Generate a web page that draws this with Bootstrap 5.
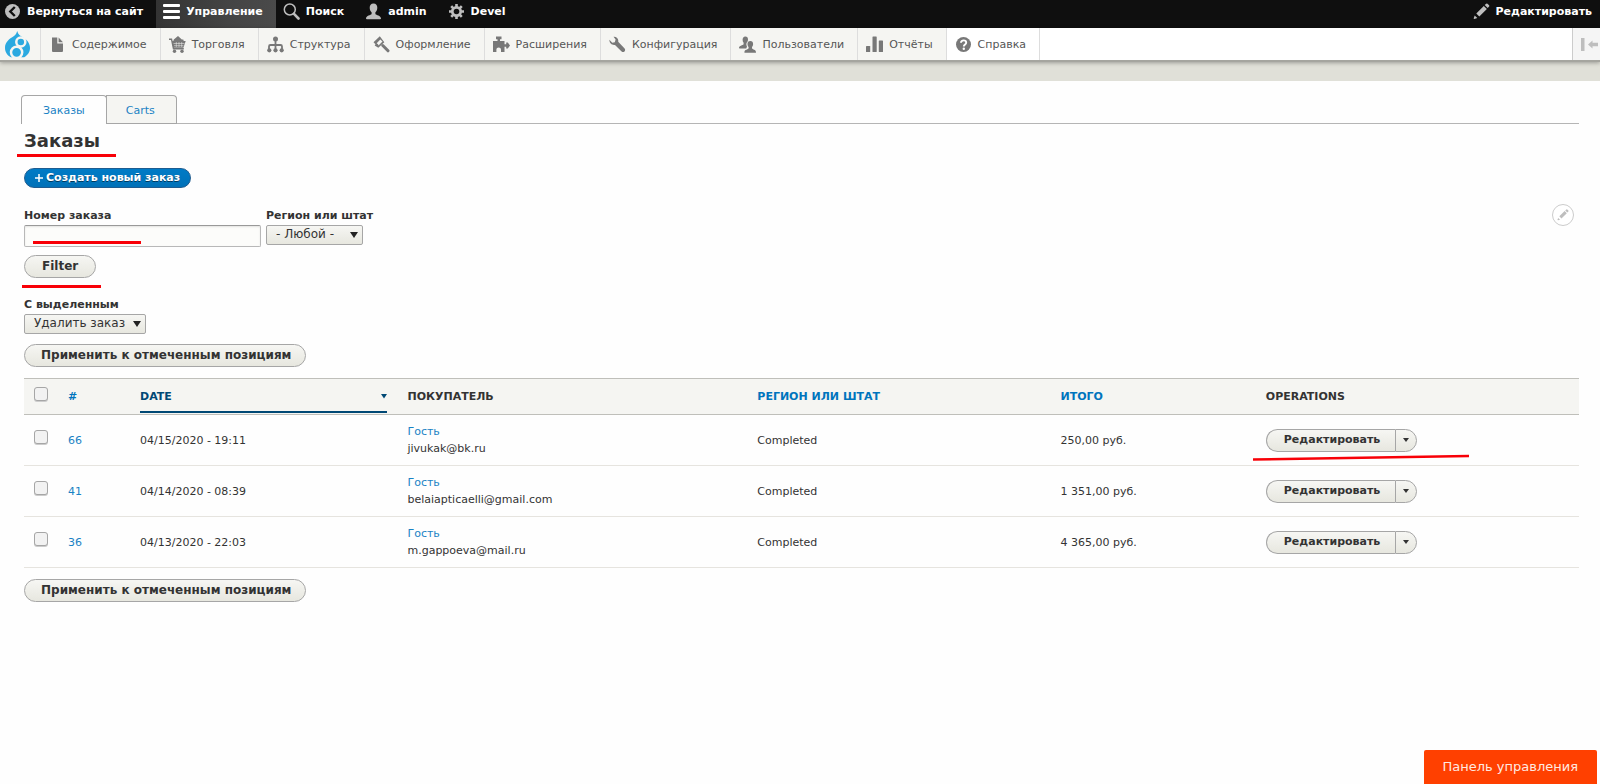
<!DOCTYPE html>
<html lang="ru">
<head>
<meta charset="utf-8">
<meta name="viewport" content="width=device-width, initial-scale=1">
<title>Заказы</title>
<link href="https://cdn.jsdelivr.net/npm/bootstrap@5.3.0/dist/css/bootstrap.min.css" rel="stylesheet">
<style>
  body { font: 11px/16px "DejaVu Sans", sans-serif; color: #333; background: #fefefe; min-height: 100vh; }
  a { color: #0074bd; text-decoration: none; }
  a:hover { color: #004f80; }

  .admin-bar { background: #0f0f0f; height: 28px; }
  .admin-bar a { color: #fff; font-weight: 700; padding: 0 14px 5px 7px; gap: 6px; }
  .admin-bar a.bar-home { padding-left: 4px; padding-right: 13px; }
  .admin-bar a.bar-active { padding-right: 13px; background: linear-gradient(90deg, #333, #444 60%, #4a4a4a); }
  .admin-bar a.bar-edit { padding-right: 8px; gap: 5px; }
  .admin-bar svg, .admin-tray svg { width: 17px; height: 17px; flex: none; }

  .admin-tray { height: 34px; background: #fff; border-bottom: 2px solid #a5a59f; box-shadow: 0 1px 4px rgba(0,0,0,.3); z-index: 2; }
  .admin-tray a { color: #565656; padding: 1px 13px 0 8px; gap: 6px; background: #f5f5f2; border-right: 1px solid #ddd; }
  .admin-tray a.tray-logo { padding: 0 9px 0 4px; }
  .admin-tray a.tray-logo svg { width: 27px; height: 27px; }
  .admin-tray a.tray-help { background: #fff; }
  .admin-tray button { width: 28px; background: #f5f5f5; border: 0; border-left: 1px solid #ccc; padding: 0 0 0 8px; }
  .page-strip { height: 19px; background: #e0e0d8; }

  .page-main { padding: 14px 21px 0; }
  .page-tabs { border-bottom: 1px solid #b5b5b5; }
  .page-tabs a { height: 28px; padding: 2px 21px 0; color: #1a82c4; border: 1px solid #a6a6a6; border-bottom: 0; background: #f5f5f2; border-radius: 0 4px 0 0; margin-left: -1px; }
  .page-tabs a.tab-current { height: 29px; margin: 0 0 -1px; background: #fefefe; border-radius: 4px 4px 0 0; z-index: 1; }
  .page-tabs a:last-child { padding: 2px 21px 0 19px; box-shadow: 0 1px 0 #a6a6a6; }

  .page-body { padding: 0 0 0 3px; }
  .page-title { font-size: 18px; line-height: 24px; font-weight: 700; margin: 5px 0 15px; }
  .btn-new { height: 20px; padding: 1px 10px; gap: 3px; border: 1px solid #1e5c90; border-radius: 20px; background: linear-gradient(#007bc6, #0071b8); color: #fff; font-size: 11px; line-height: 16px; font-weight: 700; text-shadow: 0 1px #0000007f; }
  .btn-new:hover { color: #fff; }

  .field-label { font-weight: 700; line-height: 14px; margin-bottom: 2px; }
  .text-entry { width: 237px; height: 22px; border: 1px solid #b8b8b8; border-top-color: #999; border-radius: 2px; background: #fcfcfa; font-size: 12px; box-shadow: inset 0 1px 2px rgba(0,0,0,.1); }
  .pick { height: 20px; padding: 0 16px 2px 9px; line-height: 16px; font-size: 12px; color: #333; border: 1px solid #a6a6a6; border-radius: 2px;
    background: url("data:image/svg+xml,%3Csvg xmlns='http://www.w3.org/2000/svg' viewBox='0 0 8 6'%3E%3Cpath fill='%23222' d='M0 0h8L4 6z'/%3E%3C/svg%3E") no-repeat right 4px center / 8px 6px, linear-gradient(#f6f6f3, #e7e7df); }
  .pick-region { width: 97px; }
  .pick-action { width: 122px; }
  .btn-pill { height: 23px; padding: 0 17px 1px; border: 1px solid #a6a6a6; border-radius: 20px; background: linear-gradient(#f6f6f3, #e7e7df); color: #333; font-size: 12px; line-height: 16px; font-weight: 700; }
  .btn-apply { padding: 0 14px 1px 16px; }
  .edit-circle { width: 22px; height: 22px; right: 5px; top: -5px; border: 1px solid #ccc; border-radius: 50%; background: #fff; }
  .form-filter { margin-top: 21px; }
  .form-bulk { margin-top: 20px; }
  .bulk-choice { margin-bottom: 10px; }

  .orders { table-layout: fixed; margin: 11px 0; line-height: 17px; border-top: 1px solid #bfbfba; }
  .orders th, .orders td { padding: 0 10px; vertical-align: middle; background: transparent; color: #333; }
  .orders thead th { height: 36px; background: #f5f5f2; border-bottom: 1px solid #bfbfba; text-transform: uppercase; }
  .orders tbody td { height: 51px; border-bottom: 1px solid #e6e4df; }
  .orders tbody a { color: #1a82c4; }
  .orders .col-check { width: 34px; }
  .orders .col-num { width: 72px; }
  .orders .col-date { width: 17.2%; }
  .orders .col-buyer { width: 22.5%; }
  .orders .col-region { width: 19.5%; }
  .orders .col-total { width: 13.2%; }
  .orders thead th.date-head { vertical-align: bottom; }
  .date-head a { height: 33px; padding-top: 1px; color: #004875; border-bottom: 2px solid #004875; margin-bottom: 1px; }
  .orders .form-check-input { width: 14px; height: 14px; margin: 0 0 6px; border: 1px solid #a6a6a6; border-radius: 3px; background-color: #f2f2f2; box-shadow: 0 1px 0 #ccc; vertical-align: middle; }
  .ops .btn-pill { font-size: 11px; }
  .ops .ops-edit { padding: 0 15px 0 17px; border-radius: 20px 0 0 20px; border-right: 0; }
  .ops .ops-more { width: 22px; padding: 0; border-radius: 0 20px 20px 0; }

  .red-mark { position: absolute; height: 3px; background: #f80007; pointer-events: none; }
  .mark-title { left: -7px; width: 99px; bottom: -4px; }
  .mark-field { left: 9px; width: 108px; bottom: 3px; }
  .mark-filter { left: -2px; width: 79px; bottom: -10px; }
  .mark-ops { position: absolute; left: -13px; top: 24px; width: 216px; height: 8px; pointer-events: none; }

  .panel-btn { right: 3px; bottom: 0; height: 34px; padding: 0 19px; background: #ff4000; color: #ffe9e0; border: 0; border-radius: 2px 2px 0 0; font-size: 13px; }
</style>
</head>
<body>
<header>
  <nav class="admin-bar d-flex text-nowrap" aria-label="Панель">
    <a class="bar-home d-flex align-items-center" href="#"><svg viewBox="0 0 17 17"><circle cx="8.500" cy="8.500" r="7.500" fill="#bebebe"/><path d="M10.800 4 6.300 8.500l4.500 4.500" fill="none" stroke="#0f0f0f" stroke-width="2.400"/></svg>Вернуться на сайт</a>
    <a class="bar-active d-flex align-items-center" href="#"><svg viewBox="0 0 17 17" fill="#fff"><rect y="1" width="17" height="3" rx="1"/><rect y="7" width="17" height="3" rx="1"/><rect y="13" width="17" height="3" rx="1"/></svg>Управление</a>
    <a class="d-flex align-items-center" href="#"><svg viewBox="0 0 17 17" fill="none" stroke="#bebebe"><circle cx="6.800" cy="6.500" r="5.500" stroke-width="1.500"/><path d="m11 10.800 4.500 4.700" stroke-width="2.600" stroke-linecap="round"/></svg>Поиск</a>
    <a class="d-flex align-items-center" href="#"><svg viewBox="0 0 17 17" fill="#bebebe"><path d="M8.500.5c2.600 0 3.800 1.900 3.800 4.200 0 2-.9 3.600-1.900 4.600v1.600c.8 1.300 5.400 1.300 5.600 4.600 0 .6-.3.8-.9.800H1.900c-.6 0-.9-.2-.9-.8.200-3.300 4.800-3.300 5.600-4.600V9.300c-1-1-1.900-2.600-1.900-4.600C4.700 2.400 5.900.5 8.500.5z"/></svg>admin</a>
    <a class="d-flex align-items-center" href="#"><svg viewBox="0 0 17 17"><g stroke="#bebebe" stroke-width="2.600"><path d="M8.500 1v15M1 8.500h15M3.200 3.200l10.600 10.600M13.800 3.200 3.200 13.800"/></g><circle cx="8.500" cy="8.500" r="5.500" fill="#bebebe"/><circle cx="8.500" cy="8.500" r="2.800" fill="#0f0f0f"/></svg>Devel</a>
    <a class="bar-edit d-flex align-items-center ms-auto" href="#"><svg viewBox="0 0 17 17" fill="#bebebe"><path d="m11.700 2 1.500-1.300a1 1 0 0 1 1.300 0l1.600 1.600a1 1 0 0 1 0 1.300l-1.400 1.500zM10.800 2.900l3.100 3.100-7.600 7.400-3-3zM1.700 12.600l2.600 2.500-2.900 1-.8-.7z"/></svg>Редактировать</a>
  </nav>
  <nav class="admin-tray d-flex text-nowrap position-relative" aria-label="Управление">
    <a class="tray-logo d-flex align-items-center" href="#" aria-label="Drupal"><svg viewBox="0 0 27 27"><path d="M13.200 0c.8 3.500 3 4.800 6 6.600 3.800 2.300 6.800 5.800 6.800 10.400 0 4.200-2.400 7.400-5.800 9.200H7C3.400 24.600 1 21 1 17c0-5 3.200-8.200 6.800-10.400C10.500 5 12.400 3.200 13.200 0z" fill="#2ba9e0"/><circle cx="12.600" cy="21.300" r="5.600" fill="#2ba9e0" stroke="#f5f5f2" stroke-width="2.500"/><circle cx="16.800" cy="11" r="4.500" fill="#2ba9e0" stroke="#f5f5f2" stroke-width="2.500"/></svg></a>
    <a class="d-flex align-items-center" href="#"><svg viewBox="0 0 17 17" fill="#787878"><path d="M3 1.500h5.300v6H14V15a1 1 0 0 1-1 1H4a1 1 0 0 1-1-1zM9.600 1.500 14 6.200H9.600z"/></svg>Содержимое</a>
    <a class="d-flex align-items-center" href="#"><svg viewBox="0 0 17 17"><path d="M9 0 4.800 3.500 4 6h11l-.7-2.500h-1.500z" fill="#787878"/><path d="M0 3.200h2.500l2 9.500h10.300" fill="none" stroke="#787878" stroke-width="1.400"/><path d="M3 5h13.700l-2.300 6.800H4.300z" fill="#787878"/><path d="M4.500 7.500h11M5 9.700h9.500M7.300 6v5M10 6v5M12.700 6v5" stroke="#f5f5f2" stroke-width=".5"/><circle cx="5.500" cy="15.300" r="1.700" fill="#787878"/><circle cx="13" cy="15.300" r="1.700" fill="#787878"/></svg>Торговля</a>
    <a class="d-flex align-items-center" href="#"><svg viewBox="0 0 17 17"><path d="M8.500 4v10M2 14v-3.500q0-1.500 1.500-1.500h10q1.500 0 1.500 1.500V14" fill="none" stroke="#787878" stroke-width="1.800"/><g fill="#787878"><circle cx="8.500" cy="3" r="2.500"/><circle cx="2.300" cy="14.300" r="2.100"/><circle cx="8.500" cy="14.300" r="2.100"/><circle cx="14.700" cy="14.300" r="2.100"/></g></svg>Структура</a>
    <a class="d-flex align-items-center" href="#"><svg viewBox="0 0 17 17"><path d="M6.800.3.500 6.200l2 2.100-.8 1.200 3.600 2.300 6-5.600z" fill="#787878"/><path d="m5.500 9.500 4-3.900-2.200-2.200-3.600 3.800 1.500 1.200z" fill="#f5f5f2"/><path d="m9.800 9.500 5.200 5.300" stroke="#787878" stroke-width="3" stroke-linecap="round"/></svg>Оформление</a>
    <a class="d-flex align-items-center" href="#"><svg viewBox="0 0 17 17"><path d="M0 5h4.500V3.200H3V.5h5.500v2.700H7V5h4.500v3.300h1.700V6.600h1.600L17 9.500l-2.200 2.900h-1.600v-1.700h-1.700V16H8v-2.300c0-3-4.600-3-4.600 0V16H0z" fill="#787878"/></svg>Расширения</a>
    <a class="d-flex align-items-center" href="#"><svg viewBox="0 0 17 17"><path d="M4.500.8c3.200-.3 5.300 2 4.700 5l6.400 6.700c1.700 2-1 4.800-3 3L6 8.900C3.200 9.500.2 7.300.4 3.700l2.900 3 2.500-.5.800-2.700z" fill="#787878"/></svg>Конфигурация</a>
    <a class="d-flex align-items-center" href="#"><svg viewBox="0 0 17 17" fill="#787878"><path d="M6.300.5c1.900 0 2.700 1.300 2.700 3 0 .9-.2 1.500-.6 2.200-1.300 1-1.300 3.200-.4 5l-.8 1.700H.6c-.4 0-.6-.3-.6-.6.200-2.400 3.600-2.200 4.600-3.600V6.700c-.7-.8-1-1.800-1-3 0-1.900.9-3.200 2.700-3.200z"/><path d="M11.300 5c1.900 0 2.800 1.300 2.800 3 0 1.300-.5 2.300-1.100 3v1.300c.6 1.400 3.900 1.200 4 3.900 0 .4-.2.600-.6.600H6c-.4 0-.6-.2-.6-.6.100-2.700 3.600-2.500 4.200-3.900V11c-.6-.7-1.100-1.700-1.100-3 0-1.700.9-3 2.800-3z"/></svg>Пользователи</a>
    <a class="d-flex align-items-center" href="#"><svg viewBox="0 0 17 17" fill="#787878"><rect y="10" width="4.200" height="6" rx=".6"/><rect x="6.500" y=".5" width="4.200" height="15.500" rx=".6"/><rect x="12.800" y="4.500" width="4.200" height="11.500" rx=".6"/></svg>Отчёты</a>
    <a class="tray-help d-flex align-items-center" href="#"><svg viewBox="0 0 17 17"><circle cx="8.500" cy="8.500" r="7.500" fill="#787878"/><path d="M6 6.700c0-3.200 5.200-3 5.200 0 0 1.900-2.400 1.800-2.400 3.900" fill="none" stroke="#fff" stroke-width="1.900"/><circle cx="8.800" cy="12.800" r="1.200" fill="#fff"/></svg>Справка</a>
    <button class="d-flex align-items-center ms-auto" type="button" aria-label="Вертикальная ориентация"><svg viewBox="0 0 17 17" fill="#bebebe"><path d="M0 2h3.500v13H0zM7 8.500 11.500 4.500v2.200H17v3.600h-5.500v2.200z"/></svg></button>
  </nav>
  <div class="page-strip"></div>
</header>

<main class="page-main">
  <nav class="page-tabs d-flex" aria-label="Вкладки">
    <a class="tab-current d-flex align-items-center position-relative" href="#">Заказы</a>
    <a class="d-flex align-items-center" href="#">Carts</a>
  </nav>
  <div class="page-body">
    <h1 class="page-title position-relative">Заказы<span class="red-mark mark-title"></span></h1>
    <a class="btn btn-new d-inline-flex align-items-center align-top" href="#"><svg width="8" height="8" viewBox="0 0 8 8" aria-hidden="true"><path d="M4 0v8M0 4h8" stroke="#fff" stroke-width="1.500"/></svg>Создать новый заказ</a>

    <form class="form-filter position-relative">
      <div class="d-flex align-items-start" style="gap:5px">
        <div class="d-flex flex-column">
          <label class="field-label" for="order-number">Номер заказа</label>
          <div class="position-relative d-flex">
            <input class="text-entry" type="text" id="order-number">
            <span class="red-mark mark-field"></span>
          </div>
        </div>
        <div class="d-flex flex-column">
          <label class="field-label" for="order-region">Регион или штат</label>
          <select class="form-select pick pick-region" id="order-region"><option>- Любой -</option></select>
        </div>
      </div>
      <div class="d-flex mt-2">
        <div class="d-flex position-relative">
          <button class="btn btn-pill" type="submit">Filter</button>
          <span class="red-mark mark-filter"></span>
        </div>
      </div>
      <button class="edit-circle position-absolute d-flex align-items-center justify-content-center p-0" type="button" aria-label="Настроить"><svg width="12" height="12" viewBox="0 0 17 17" fill="#bebebe"><path d="m11.700 2 1.500-1.300a1 1 0 0 1 1.300 0l1.600 1.600a1 1 0 0 1 0 1.300l-1.400 1.500zM10.800 2.900l3.100 3.100-7.600 7.400-3-3zM1.700 12.600l2.600 2.500-2.900 1-.8-.7z"/></svg></button>
    </form>

    <form class="form-bulk">
      <div class="bulk-choice d-flex flex-column">
        <label class="field-label" for="bulk-action">С выделенным</label>
        <select class="form-select pick pick-action" id="bulk-action"><option>Удалить заказ</option></select>
      </div>
      <button class="btn btn-pill btn-apply d-block" type="submit">Применить к отмеченным позициям</button>

      <table class="table orders">
        <thead>
          <tr>
            <th class="col-check"><input class="form-check-input" type="checkbox" aria-label="Выбрать все"></th>
            <th class="col-num"><a href="#">#</a></th>
            <th class="col-date date-head"><a class="d-flex align-items-center justify-content-between" href="#">Date<svg width="6" height="5" viewBox="0 0 6 5" aria-hidden="true"><path d="M0 0h6L3 4.500z" fill="#004875"/></svg></a></th>
            <th class="col-buyer">Покупатель</th>
            <th class="col-region"><a href="#">Регион или штат</a></th>
            <th class="col-total"><a href="#">Итого</a></th>
            <th>Operations</th>
          </tr>
        </thead>
        <tbody>
          <tr>
            <td><input class="form-check-input" type="checkbox" aria-label="Заказ 66"></td>
            <td><a href="#">66</a></td>
            <td>04/15/2020 - 19:11</td>
            <td><a href="#">Гость</a><br>jivukak@bk.ru</td>
            <td>Completed</td>
            <td>250,00 руб.</td>
            <td><div class="ops d-flex position-relative"><button class="btn btn-pill ops-edit" type="button">Редактировать</button><button class="btn btn-pill ops-more d-flex align-items-center justify-content-center" type="button" aria-label="Ещё действия"><svg width="6" height="4" viewBox="0 0 6 4"><path d="M0 0h6L3 4z" fill="#333"/></svg></button><svg class="mark-ops" viewBox="0 0 216 8" aria-hidden="true"><path d="M0 6.500 216 3" stroke="#f80007" stroke-width="2.600"/></svg></div></td>
          </tr>
          <tr>
            <td><input class="form-check-input" type="checkbox" aria-label="Заказ 41"></td>
            <td><a href="#">41</a></td>
            <td>04/14/2020 - 08:39</td>
            <td><a href="#">Гость</a><br>belaiapticaelli@gmail.com</td>
            <td>Completed</td>
            <td>1 351,00 руб.</td>
            <td><div class="ops d-flex"><button class="btn btn-pill ops-edit" type="button">Редактировать</button><button class="btn btn-pill ops-more d-flex align-items-center justify-content-center" type="button" aria-label="Ещё действия"><svg width="6" height="4" viewBox="0 0 6 4"><path d="M0 0h6L3 4z" fill="#333"/></svg></button></div></td>
          </tr>
          <tr>
            <td><input class="form-check-input" type="checkbox" aria-label="Заказ 36"></td>
            <td><a href="#">36</a></td>
            <td>04/13/2020 - 22:03</td>
            <td><a href="#">Гость</a><br>m.gappoeva@mail.ru</td>
            <td>Completed</td>
            <td>4 365,00 руб.</td>
            <td><div class="ops d-flex"><button class="btn btn-pill ops-edit" type="button">Редактировать</button><button class="btn btn-pill ops-more d-flex align-items-center justify-content-center" type="button" aria-label="Ещё действия"><svg width="6" height="4" viewBox="0 0 6 4"><path d="M0 0h6L3 4z" fill="#333"/></svg></button></div></td>
          </tr>
        </tbody>
      </table>
      <button class="btn btn-pill btn-apply" type="submit">Применить к отмеченным позициям</button>
    </form>
  </div>
</main>
<button class="panel-btn position-fixed" type="button">Панель управления</button>
<script src="https://cdn.jsdelivr.net/npm/bootstrap@5.3.0/dist/js/bootstrap.bundle.min.js"></script>
</body>
</html>
